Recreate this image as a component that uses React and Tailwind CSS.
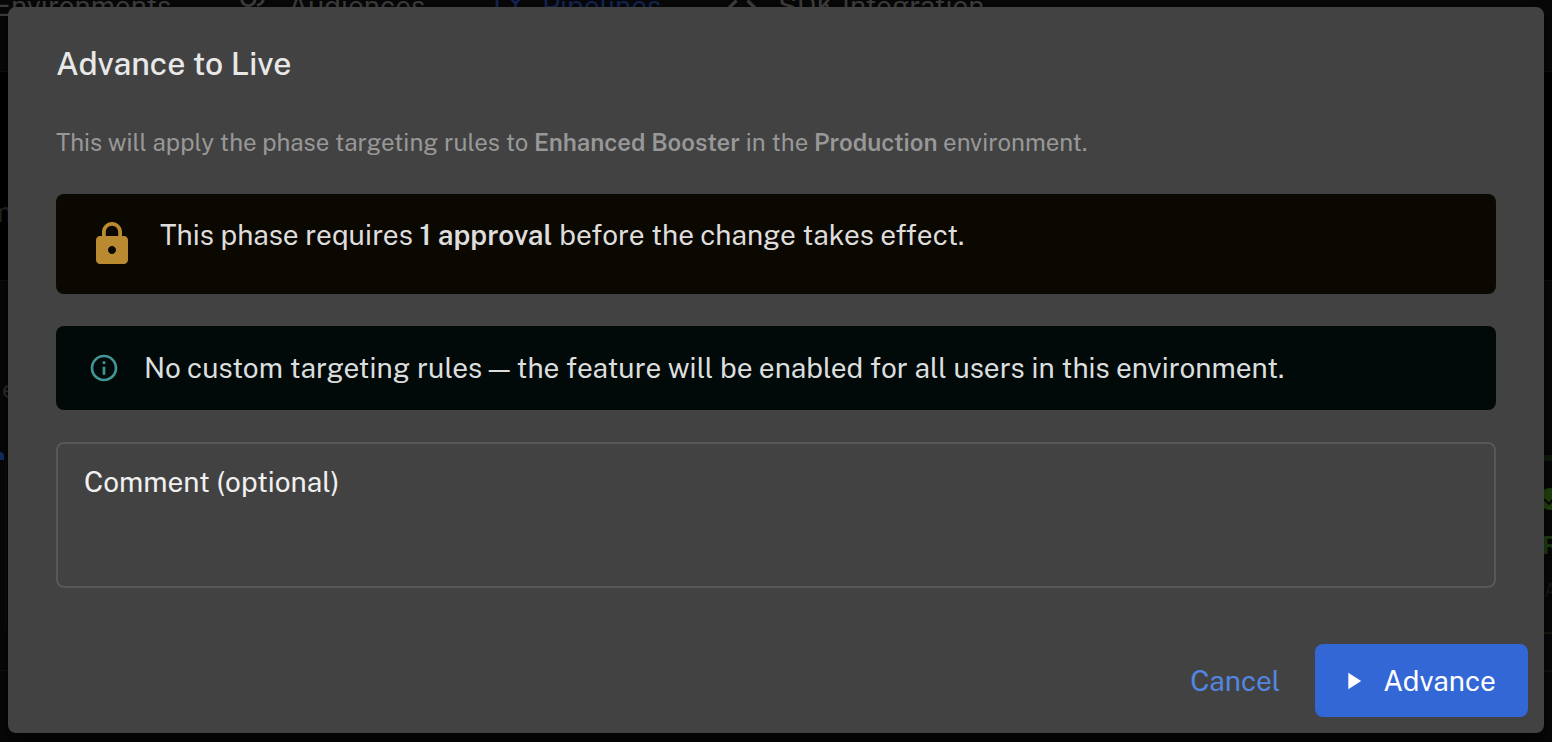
const tabs = [
  { name: "Environments" },
  { name: "Audiences", icon: "people" },
  { name: "Pipelines", icon: "pipeline", active: true },
  { name: "SDK Integration", icon: "code" },
];

function TabIcon({ name }) {
  if (name === "people")
    return (
      <svg viewBox="0 0 24 24" className="size-10" fill="none" stroke="currentColor" strokeWidth="1.8">
        <circle cx="9.8" cy="7.8" r="4" />
        <path d="M15 11.6c2.2-.3 3.8-1.9 3.8-4.2" />
      </svg>
    );
  if (name === "pipeline")
    return (
      <svg viewBox="0 0 24 24" className="size-10" fill="none" stroke="currentColor" strokeWidth="1.6">
        <path d="M6.6 3v18M14.2 6.6l3.5 4 3.5-4M17.7 10v11" />
      </svg>
    );
  return (
    <svg viewBox="0 -2 24 24" className="size-10" fill="currentColor">
      <path d="M9.4 16.6L4.8 12l4.6-4.6L8 6l-6 6 6 6 1.4-1.4zm5.2 0l4.6-4.6-4.6-4.6L16 6l6 6-6 6-1.4-1.4z" />
    </svg>
  );
}

function Backdrop() {
  return (
    <div aria-hidden="true" className="flex h-full flex-col overflow-hidden bg-black">
      <div className="h-[72px] shrink-0 overflow-hidden border-b border-[#0e0e0e] bg-[#070707]">
        <div className="-mt-3.5 -ml-1.5 flex h-10 items-center gap-[61px] text-[28px] leading-10 text-[#3a3a3a]">
          {tabs.map((tab) => (
            <span
              key={tab.name}
              className={tab.active ? "flex items-center gap-4 text-[#12234f]" : "flex items-center gap-4"}
            >
              {tab.icon && <TabIcon name={tab.icon} />}
              {tab.name}
            </span>
          ))}
        </div>
      </div>
      <div className="flex h-[208px] shrink-0 items-end pb-[50px] text-[28px] leading-9 text-[#242424]">
        <span className="-ml-3">m</span>
      </div>
      <div className="flex grow justify-between border-t border-[#0e0e0e] bg-[#070707]">
        <div className="flex flex-col pt-[90px] text-2xl leading-9 text-[#2a2a2a]">
          <span className="pl-0.5">e</span>
          <span className="mt-[45px] h-2 w-1 rounded-tr-full bg-[#122d60]" />
          <span className="h-[174px] w-1.5 rounded-br-lg border-r border-[#101010]" />
          <span className="mt-9 h-px w-2 bg-[#101010]" />
        </div>
        <div className="flex w-2 flex-col overflow-hidden pt-[174px] text-[#1f3a14]">
          <span className="h-1.5 shrink-0 bg-[#10190c]" />
          <svg viewBox="0 0 24 24" className="-ml-1.5 mt-[26px] size-6 shrink-0">
            <circle cx="12" cy="12" r="11" fill="#213f0e" />
            <path d="M6 12l5 5 8-9" fill="none" stroke="#070707" strokeWidth="2" />
          </svg>
          <span className="-ml-0.5 mt-3.5 text-2xl leading-10 font-bold">R</span>
          <span className="mt-3 text-lg leading-7 text-[#141814]">A</span>
          <span className="mt-[27px] h-0.5 shrink-0 bg-[#10190c]" />
          <span className="mt-9 h-0.5 shrink-0 bg-[#101010]" />
        </div>
      </div>
    </div>
  );
}

export default function App() {
  return (
    <div className="relative h-screen overflow-hidden bg-black font-['Public_Sans','Inter',sans-serif]">
      <Backdrop />
      <div className="absolute inset-0 overflow-auto px-2 pt-[7px] pb-2">
        <div
          role="dialog"
          aria-modal="true"
          aria-labelledby="dialog-title"
          className="rounded-lg bg-[#424242] shadow-xl shadow-black/40"
        >
          <h2 id="dialog-title" className="px-12 pt-8 text-[32px] leading-[50px] font-medium text-[#e8e8e8]">
            Advance to Live
          </h2>
          <div className="flex flex-col gap-8 px-12 pt-[33px]">
            <p className="text-2xl leading-10 text-[#989898]">
              This will apply the phase targeting rules to <strong className="font-semibold">Enhanced Booster</strong>{" "}
              in the <strong className="font-semibold">Production</strong> environment.
            </p>
            <div role="alert" className="flex items-start gap-6 rounded-lg bg-[#0b0701] px-8 py-5 text-[28px] text-[#dedddc]">
              <svg viewBox="0 0 24 24" className="my-1.5 size-12 shrink-0" fill="#b98a30">
                <path d="M18 8h-1V6c0-2.76-2.24-5-5-5S7 3.24 7 6v2H6c-1.1 0-2 .9-2 2v10c0 1.1.9 2 2 2h12c1.1 0 2-.9 2-2V10c0-1.1-.9-2-2-2zm-6 9c-1.1 0-2-.9-2-2s.9-2 2-2 2 .9 2 2-.9 2-2 2zm3.1-9H8.9V6c0-1.71 1.39-3.1 3.1-3.1 1.71 0 3.1 1.39 3.1 3.1v2z" />
              </svg>
              <p className="leading-[42px]">
                This phase requires <strong className="font-semibold">1 approval</strong> before the change takes effect.
              </p>
            </div>
            <div role="status" className="flex items-center gap-6 rounded-lg bg-[#010a09] px-8 py-[21px] text-[28px] text-[#dcdede]">
              <svg viewBox="0 0 24 24" className="size-8 shrink-0" fill="#429594">
                <path d="M11 7h2v2h-2zm0 4h2v6h-2zm1-9C6.48 2 2 6.48 2 12s4.48 10 10 10 10-4.48 10-10S17.52 2 12 2zm0 18c-4.41 0-8-3.59-8-8s3.59-8 8-8 8 3.59 8 8-3.59 8-8 8z" />
              </svg>
              <p className="leading-[42px]">
                No custom targeting rules — the feature will be enabled for all users in this environment.
              </p>
            </div>
            <textarea
              aria-label="Comment (optional)"
              placeholder="Comment (optional)"
              className="block h-[146px] w-full resize-none rounded-lg border-2 border-[#585858] bg-transparent px-[26px] py-[18px] text-[28px] leading-10 text-[#f0f0f0] outline-none placeholder:text-[#f0f0f0]"
            />
          </div>
          <div className="flex items-center justify-end gap-4 px-4 pt-14 pb-4 text-[28px]">
            <button type="button" className="rounded-lg px-[19px] py-4 leading-10 text-[#5386e0]">
              Cancel
            </button>
            <button
              type="button"
              className="flex items-center gap-4 rounded-lg bg-[#3367d6] py-4 pr-8 pl-6 leading-[41px] text-white"
            >
              <svg viewBox="0 0 24 24" className="size-7" fill="currentColor">
                <path d="M8 5v14l11-7z" />
              </svg>
              Advance
            </button>
          </div>
        </div>
      </div>
    </div>
  );
}
